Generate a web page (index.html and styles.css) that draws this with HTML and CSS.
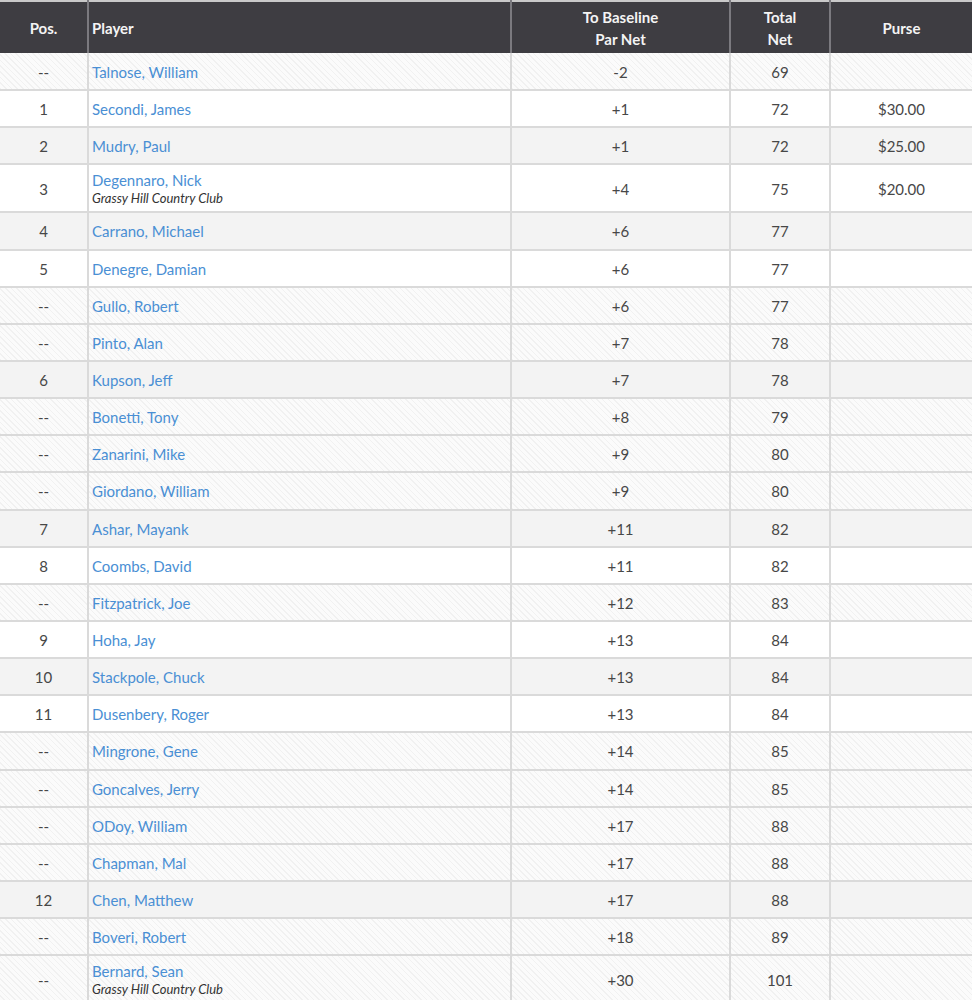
FILE: index.html
```html
<!DOCTYPE html>
<html>
<head>
<meta charset="utf-8">
<link rel="stylesheet" href="styles.css">
</head>
<body>
<table class="board">
  <colgroup>
    <col class="c-pos"><col class="c-player"><col class="c-par"><col class="c-total"><col class="c-purse">
  </colgroup>
  <thead>
    <tr>
      <th class="center">Pos.</th>
      <th class="left">Player</th>
      <th class="center">To Baseline<br>Par Net</th>
      <th class="center">Total<br>Net</th>
      <th class="center">Purse</th>
    </tr>
  </thead>
  <tbody>
    <tr class="guest"><td>--</td><td class="name"><a>Talnose, William</a></td><td>-2</td><td>69</td><td></td></tr>
    <tr><td>1</td><td class="name"><a>Secondi, James</a></td><td>+1</td><td>72</td><td>$30.00</td></tr>
    <tr><td>2</td><td class="name"><a>Mudry, Paul</a></td><td>+1</td><td>72</td><td>$25.00</td></tr>
    <tr class="tall"><td>3</td><td class="name"><a>Degennaro, Nick</a><span class="club">Grassy Hill Country Club</span></td><td>+4</td><td>75</td><td>$20.00</td></tr>
    <tr><td>4</td><td class="name"><a>Carrano, Michael</a></td><td>+6</td><td>77</td><td></td></tr>
    <tr><td>5</td><td class="name"><a>Denegre, Damian</a></td><td>+6</td><td>77</td><td></td></tr>
    <tr class="guest"><td>--</td><td class="name"><a>Gullo, Robert</a></td><td>+6</td><td>77</td><td></td></tr>
    <tr class="guest"><td>--</td><td class="name"><a>Pinto, Alan</a></td><td>+7</td><td>78</td><td></td></tr>
    <tr><td>6</td><td class="name"><a>Kupson, Jeff</a></td><td>+7</td><td>78</td><td></td></tr>
    <tr class="guest"><td>--</td><td class="name"><a>Bonetti, Tony</a></td><td>+8</td><td>79</td><td></td></tr>
    <tr class="guest"><td>--</td><td class="name"><a>Zanarini, Mike</a></td><td>+9</td><td>80</td><td></td></tr>
    <tr class="guest"><td>--</td><td class="name"><a>Giordano, William</a></td><td>+9</td><td>80</td><td></td></tr>
    <tr><td>7</td><td class="name"><a>Ashar, Mayank</a></td><td>+11</td><td>82</td><td></td></tr>
    <tr><td>8</td><td class="name"><a>Coombs, David</a></td><td>+11</td><td>82</td><td></td></tr>
    <tr class="guest"><td>--</td><td class="name"><a>Fitzpatrick, Joe</a></td><td>+12</td><td>83</td><td></td></tr>
    <tr><td>9</td><td class="name"><a>Hoha, Jay</a></td><td>+13</td><td>84</td><td></td></tr>
    <tr><td>10</td><td class="name"><a>Stackpole, Chuck</a></td><td>+13</td><td>84</td><td></td></tr>
    <tr><td>11</td><td class="name"><a>Dusenbery, Roger</a></td><td>+13</td><td>84</td><td></td></tr>
    <tr class="guest"><td>--</td><td class="name"><a>Mingrone, Gene</a></td><td>+14</td><td>85</td><td></td></tr>
    <tr class="guest"><td>--</td><td class="name"><a>Goncalves, Jerry</a></td><td>+14</td><td>85</td><td></td></tr>
    <tr class="guest"><td>--</td><td class="name"><a>ODoy, William</a></td><td>+17</td><td>88</td><td></td></tr>
    <tr class="guest"><td>--</td><td class="name"><a>Chapman, Mal</a></td><td>+17</td><td>88</td><td></td></tr>
    <tr><td>12</td><td class="name"><a>Chen, Matthew</a></td><td>+17</td><td>88</td><td></td></tr>
    <tr class="guest"><td>--</td><td class="name"><a>Boveri, Robert</a></td><td>+18</td><td>89</td><td></td></tr>
    <tr class="guest tall"><td>--</td><td class="name"><a>Bernard, Sean</a><span class="club">Grassy Hill Country Club</span></td><td>+30</td><td>101</td><td></td></tr>
  </tbody>
</table>
</body>
</html>
```
FILE: styles.css
```css
html, body {
  margin: 0;
  padding: 0;
  background: #ffffff;
}

body {
  font-family: Lato, "Open Sans", Arial, sans-serif;
  font-size: 15px;
  color: #444444;
}

.board {
  width: 972px;
  table-layout: fixed;
  border-collapse: collapse;
  border-top: 2px solid #c9c9c9;
}

.c-pos { width: 88px; }
.c-player { width: 423px; }
.c-par { width: 219px; }
.c-total { width: 100px; }
.c-purse { width: 142px; }

.board th {
  background: #3e3d42;
  color: #f4f4f4;
  font-weight: 700;
  font-size: 15px;
  line-height: 22px;
  height: 52px;
  padding: 0 3px;
  border-left: 2px solid #7b7a7f;
  box-sizing: border-box;
}

.board th:first-child { border-left: none; }

.board th.center { text-align: center; }
.board th.left { text-align: left; }

.board td {
  height: 37.15px;
  padding: 1px 3px 0;
  text-align: center;
  vertical-align: middle;
  border-left: 2px solid #dadada;
  border-bottom: 2px solid #dadada;
  box-sizing: border-box;
  color: #474747;
}

.board td:first-child { border-left: none; }

.board tbody tr:nth-child(odd) { background-color: #f3f3f3; }
.board tbody tr:nth-child(even) { background-color: #ffffff; }

.board tr.tall td { height: 48px; }

.board tbody tr.guest td {
  background-color: #fbfbfb;
  background-image: repeating-linear-gradient(45deg, rgba(0,0,0,0.04) 0 1px, rgba(0,0,0,0) 1px 4px);
}

.board td.name {
  text-align: left;
  padding-left: 3px;
}

.name a {
  display: block;
  color: #4a8fd4;
  text-decoration: none;
}

.club {
  display: block;
  font-size: 13px;
  font-style: italic;
  color: #333333;
  margin-top: 1px;
}
```
